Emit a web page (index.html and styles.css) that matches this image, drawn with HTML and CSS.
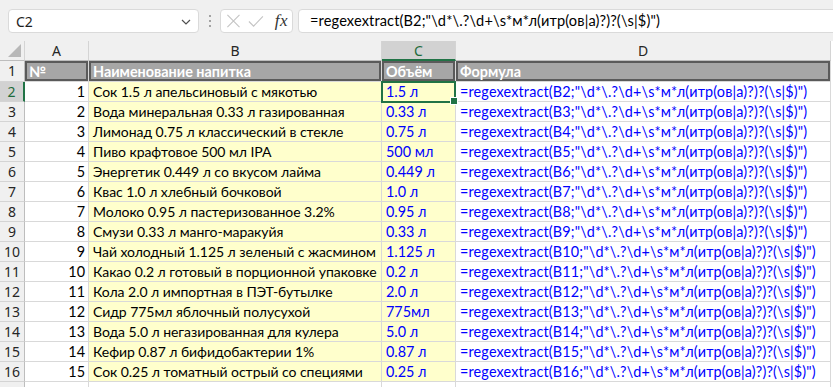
FILE: index.html
```html
<!DOCTYPE html>
<html lang="ru">
<head>
<meta charset="utf-8">
<title>regexextract</title>
<link rel="stylesheet" href="styles.css">
</head>
<body>
<div class="app">
  <div class="fbar">
    <div class="namebox">
      <span class="nb-text">C2</span>
      <svg class="chev" width="10" height="6" viewBox="0 0 10 6"><path d="M1 1 L5 5 L9 1" fill="none" stroke="#505050" stroke-width="1.2"/></svg>
    </div>
    <div class="sep"><span></span><span></span><span></span></div>
    <div class="fxbox">
      <svg width="16" height="16" viewBox="0 0 16 16"><path d="M1.5 1.5 L14.5 14.5 M14.5 1.5 L1.5 14.5" stroke="#c4c4c4" stroke-width="1.2" fill="none"/></svg>
      <svg width="17" height="13" viewBox="0 0 17 13"><path d="M1 6.5 L6 11.5 L16 1" stroke="#c4c4c4" stroke-width="1.2" fill="none"/></svg>
      <span class="fx">fx</span>
    </div>
    <div class="formula">=regexextract(B2;"\d*\.?\d+\s*м*л(итр(ов|а)?)?(\s|$)")</div>
  </div>
  <div class="sheet">
    <div class="corner"><span class="tri"></span></div>
    <div class="ch">A</div><div class="ch">B</div><div class="ch csel">C</div><div class="ch">D</div>

    <div class="rh">1</div><div class="c h1">№</div><div class="c h1">Наименование напитка</div><div class="c h1">Объём</div><div class="c h1">Формула</div>

    <div class="rh rsel">2</div><div class="c num">1</div><div class="c yl nm">Сок 1.5 л апельсиновый с мякотью</div><div class="c yl bl active">1.5 л</div><div class="c bl fm">=regexextract(B2;"\d*\.?\d+\s*м*л(итр(ов|а)?)?(\s|$)")</div>
    <div class="rh">3</div><div class="c num">2</div><div class="c yl nm">Вода минеральная 0.33 л газированная</div><div class="c yl bl">0.33 л</div><div class="c bl fm">=regexextract(B3;"\d*\.?\d+\s*м*л(итр(ов|а)?)?(\s|$)")</div>
    <div class="rh">4</div><div class="c num">3</div><div class="c yl nm">Лимонад 0.75 л классический в стекле</div><div class="c yl bl">0.75 л</div><div class="c bl fm">=regexextract(B4;"\d*\.?\d+\s*м*л(итр(ов|а)?)?(\s|$)")</div>
    <div class="rh">5</div><div class="c num">4</div><div class="c yl nm">Пиво крафтовое 500 мл IPA</div><div class="c yl bl">500 мл</div><div class="c bl fm">=regexextract(B5;"\d*\.?\d+\s*м*л(итр(ов|а)?)?(\s|$)")</div>
    <div class="rh">6</div><div class="c num">5</div><div class="c yl nm">Энергетик 0.449 л со вкусом лайма</div><div class="c yl bl">0.449 л</div><div class="c bl fm">=regexextract(B6;"\d*\.?\d+\s*м*л(итр(ов|а)?)?(\s|$)")</div>
    <div class="rh">7</div><div class="c num">6</div><div class="c yl nm">Квас 1.0 л хлебный бочковой</div><div class="c yl bl">1.0 л</div><div class="c bl fm">=regexextract(B7;"\d*\.?\d+\s*м*л(итр(ов|а)?)?(\s|$)")</div>
    <div class="rh">8</div><div class="c num">7</div><div class="c yl nm">Молоко 0.95 л пастеризованное 3.2%</div><div class="c yl bl">0.95 л</div><div class="c bl fm">=regexextract(B8;"\d*\.?\d+\s*м*л(итр(ов|а)?)?(\s|$)")</div>
    <div class="rh">9</div><div class="c num">8</div><div class="c yl nm">Смузи 0.33 л манго-маракуйя</div><div class="c yl bl">0.33 л</div><div class="c bl fm">=regexextract(B9;"\d*\.?\d+\s*м*л(итр(ов|а)?)?(\s|$)")</div>
    <div class="rh">10</div><div class="c num">9</div><div class="c yl nm">Чай холодный 1.125 л зеленый с жасмином</div><div class="c yl bl">1.125 л</div><div class="c bl fm">=regexextract(B10;"\d*\.?\d+\s*м*л(итр(ов|а)?)?(\s|$)")</div>
    <div class="rh">11</div><div class="c num">10</div><div class="c yl nm">Какао 0.2 л готовый в порционной упаковке</div><div class="c yl bl">0.2 л</div><div class="c bl fm">=regexextract(B11;"\d*\.?\d+\s*м*л(итр(ов|а)?)?(\s|$)")</div>
    <div class="rh">12</div><div class="c num">11</div><div class="c yl nm">Кола 2.0 л импортная в ПЭТ-бутылке</div><div class="c yl bl">2.0 л</div><div class="c bl fm">=regexextract(B12;"\d*\.?\d+\s*м*л(итр(ов|а)?)?(\s|$)")</div>
    <div class="rh">13</div><div class="c num">12</div><div class="c yl nm">Сидр 775мл яблочный полусухой</div><div class="c yl bl">775мл</div><div class="c bl fm">=regexextract(B13;"\d*\.?\d+\s*м*л(итр(ов|а)?)?(\s|$)")</div>
    <div class="rh">14</div><div class="c num">13</div><div class="c yl nm">Вода 5.0 л негазированная для кулера</div><div class="c yl bl">5.0 л</div><div class="c bl fm">=regexextract(B14;"\d*\.?\d+\s*м*л(итр(ов|а)?)?(\s|$)")</div>
    <div class="rh">15</div><div class="c num">14</div><div class="c yl nm">Кефир 0.87 л бифидобактерии 1%</div><div class="c yl bl">0.87 л</div><div class="c bl fm">=regexextract(B15;"\d*\.?\d+\s*м*л(итр(ов|а)?)?(\s|$)")</div>
    <div class="rh">16</div><div class="c num">15</div><div class="c yl nm">Сок 0.25 л томатный острый со специями</div><div class="c yl bl">0.25 л</div><div class="c bl fm">=regexextract(B16;"\d*\.?\d+\s*м*л(итр(ов|а)?)?(\s|$)")</div>
    <div class="rh"></div><div class="c"></div><div class="c"></div><div class="c"></div><div class="c"></div>
  </div>
</div>
</body>
</html>
```

FILE: styles.css
```css
* { box-sizing: border-box; }
html, body { margin: 0; padding: 0; }
body {
  width: 833px;
  height: 387px;
  overflow: hidden;
  background: #ffffff;
  font-family: "Noto Sans", "Open Sans", sans-serif;
}
.app { display: flex; flex-direction: column; }

/* formula bar */
.fbar {
  height: 41px;
  background: #f0f0f0;
  display: flex;
  align-items: flex-start;
  padding: 9px 0 0 8px;
}
.namebox {
  width: 191px;
  height: 24px;
  background: #fff;
  border: 1px solid #dadada;
  border-radius: 4px;
  display: flex;
  align-items: center;
  justify-content: space-between;
  padding: 0 7px 0 7px;
}
.nb-text { font-size: 14px; color: #1e1e1e; }
.chev { margin-top: 1px; }
.sep {
  width: 21px;
  height: 24px;
  display: flex;
  flex-direction: column;
  align-items: center;
  justify-content: center;
  gap: 3px;
}
.sep span { width: 2px; height: 2px; background: #8a8a8a; border-radius: 1px; }
.fxbox {
  width: 73px;
  height: 24px;
  background: #fff;
  border: 1px solid #dadada;
  border-radius: 4px;
  display: flex;
  align-items: center;
  padding: 0 4px 0 5px;
  gap: 7px;
}
.fx {
  font-family: "Liberation Serif", serif;
  font-style: italic;
  font-size: 17px;
  color: #333;
  margin-left: 4px;
  letter-spacing: 0.5px;
}
.formula {
  flex: 1;
  margin-left: 5px;
  margin-right: -10px;
  height: 24px;
  background: #fff;
  border: 1px solid #dadada;
  border-radius: 4px;
  padding: 0 0 0 11px;
  font-family: Lato, "Noto Sans", sans-serif;
  font-size: 14.6px;
  letter-spacing: 0.12px;
  line-height: 22px;
  color: #000;
  white-space: nowrap;
}

/* sheet */
.sheet {
  display: grid;
  grid-template-columns: 25px 64px 293px 74px 375px;
  grid-template-rows: 20px 21px repeat(16, 20px);
  background: #fff;
}
.corner {
  background: #f0f0f0;
  border-right: 1px solid #d4d4d4;
  border-bottom: 1px solid #bdbdbd;
  display: flex;
  align-items: flex-end;
  justify-content: flex-end;
  padding: 0 3px 3px 0;
}
.tri {
  width: 13px;
  height: 13px;
  background: #b8b8b8;
  clip-path: polygon(100% 0, 100% 100%, 0 100%);
}
.ch {
  background: #f0f0f0;
  border-right: 1px solid #d4d4d4;
  border-bottom: 1px solid #bdbdbd;
  text-align: center;
  font-size: 14px;
  line-height: 20px;
  color: #262626;
}
.ch.csel {
  background: #d2d2d2;
  color: #1e6b3c;
  border-bottom: 2px solid #217346;
}
.rh {
  background: #f0f0f0;
  border-right: 1px solid #bdbdbd;
  border-bottom: 1px solid #d4d4d4;
  text-align: center;
  font-size: 14px;
  line-height: 20px;
  color: #262626;
}
.rh.rsel {
  background: #d2d2d2;
  color: #1e6b3c;
  border-right: 2px solid #217346;
}

.c {
  border-right: 1px solid #d9d9d9;
  border-bottom: 1px solid #d9d9d9;
  font-family: Lato, "Noto Sans", sans-serif;
  font-size: 14.4px;
  line-height: 20px;
  padding: 0 3px 0 4px;
  white-space: nowrap;
  overflow: hidden;
  color: #000;
}
.c.nm { font-size: 14px; letter-spacing: -0.05px; padding-right: 0; }
.c.fm { letter-spacing: 0.16px; }
.c.h1 {
  background: #a6a6a6;
  color: #fff;
  font-weight: bold;
  box-shadow: inset 0 0 0 2px #5a5a5a;
  padding-left: 4px;
  line-height: 21px;
}
.c.num { text-align: right; }
.c.yl { background: #ffffcc; }
.c.bl { color: #0000ff; }
.c.active { position: relative; overflow: visible; }
.c.active::after {
  content: "";
  position: absolute;
  left: -1px;
  top: -1px;
  right: -1px;
  bottom: -2px;
  border: 2px solid #217346;
  pointer-events: none;
}
.c.active::before {
  content: "";
  position: absolute;
  right: -3px;
  bottom: -4px;
  width: 6px;
  height: 6px;
  background: #217346;
  border: 1px solid #fff;
  z-index: 2;
}
```
